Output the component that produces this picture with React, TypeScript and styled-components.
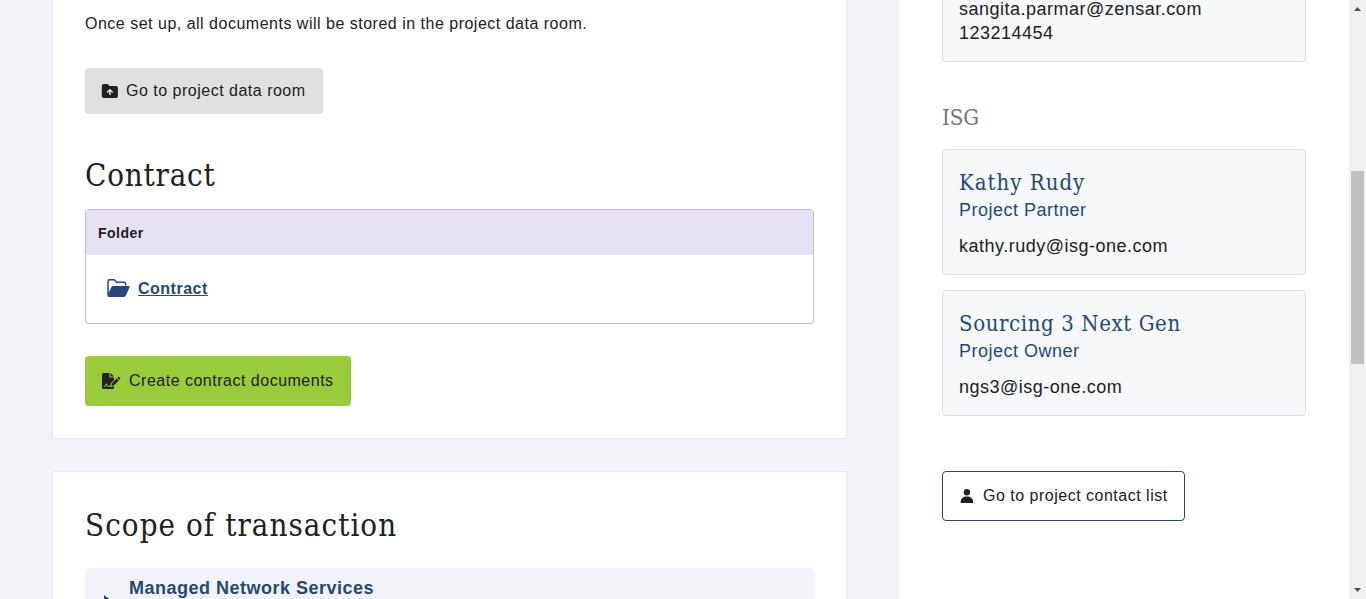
import React from "react";
import styled, { createGlobalStyle } from "styled-components";

const GlobalStyle = createGlobalStyle`
  * { box-sizing: border-box; }
  body {
    margin: 0;
    overflow: hidden;
    background: #f2f3f8;
    color: #212121;
    font: 16px/24px "Liberation Sans", Arial, sans-serif;
    letter-spacing: 0.5px;
  }
`;

const slab = `"Roboto Slab", "DejaVu Serif Condensed", "DejaVu Serif", serif`;

const Page = styled.div`
  display: flex;
  height: 599px;
  overflow: hidden;
`;

const Main = styled.main`
  width: 899px;
  padding: 0 52px;
  display: flex;
  flex-direction: column;
  gap: 32px;
`;

const Panel = styled.section<{ $first?: boolean }>`
  flex: none;
  height: ${(p) => (p.$first ? 439 : 180)}px;
  padding: ${(p) => (p.$first ? "12px" : "31px")} 32px 0;
  background: #fff;
  border: 1px solid #e8e8ea;
  border-top-width: ${(p) => (p.$first ? 0 : 1)}px;
`;

const Intro = styled.p`
  margin: 0 0 32px;
`;

const Heading = styled.h2<{ $top?: number; $spacing: number }>`
  margin: ${(p) => p.$top ?? 0}px 0 0;
  height: 44px;
  font: 400 31px/44px ${slab};
  letter-spacing: ${(p) => p.$spacing}px;
  white-space: nowrap;
`;

const Button = styled.button<{ $tone: "grey" | "green" | "outline" }>`
  display: flex;
  align-items: center;
  width: ${(p) => ({ grey: 238, green: 266, outline: 243 })[p.$tone]}px;
  height: ${(p) => (p.$tone === "grey" ? 46 : 50)}px;
  padding: 0 0 0 ${(p) => (p.$tone === "green" ? 17 : 16)}px;
  gap: ${(p) => ({ grey: 8, green: 8, outline: 9 })[p.$tone]}px;
  color: #212121;
  background: ${(p) => ({ grey: "#e0e0e0", green: "#9acb3b", outline: "#fff" })[p.$tone]};
  border: ${(p) => (p.$tone === "outline" ? "1px solid #27477a" : "0")};
  border-radius: 4px;
  font: inherit;
  letter-spacing: inherit;
  white-space: nowrap;

  svg { flex: none; }
`;

const FolderTable = styled.div`
  height: 115px;
  margin: 12px 0 32px;
  border: 1px solid #bdb8d6;
  border-radius: 4px;
  overflow: hidden;
`;

const TableHead = styled.div`
  height: 45px;
  padding: 0 12px;
  background: #e7e2f1;
  font-size: 14px;
  font-weight: 700;
  line-height: 46px;
`;

const TableRow = styled.div`
  display: flex;
  align-items: center;
  gap: 8px;
  height: 67px;
  padding-left: 21px;

  svg { margin-bottom: 2px; }
`;

const FolderLink = styled.a`
  color: #27477a;
  font-weight: 700;
  text-decoration: underline;
`;

const Accordion = styled.div`
  display: flex;
  gap: 17px;
  height: 60px;
  margin-top: 21px;
  padding: 8px 19px;
  border-radius: 4px;
  background: #f2f3f8;
  color: #27477a;
  font-size: 18px;
  font-weight: 700;

  svg { margin-top: 19px; }
`;

const Aside = styled.aside`
  width: 450px;
  padding: 0 43px;
  background: #fff;
`;

const ContactCard = styled.article<{ $tail?: boolean }>`
  display: flow-root;
  height: ${(p) => (p.$tail ? 62 : 126)}px;
  margin-bottom: ${(p) => (p.$tail ? 41 : 15)}px;
  padding: ${(p) => (p.$tail ? "0" : "18px")} 16px 0;
  border: 1px solid #d9dee6;
  border-top-width: ${(p) => (p.$tail ? 0 : 1)}px;
  border-radius: ${(p) => (p.$tail ? "0 0 4px 4px" : "4px")};
  background: #f6f8fa;
  font-size: 18px;
`;

const TailLines = styled.div`
  margin-top: -3px;
`;

const GroupTitle = styled.h3`
  margin: 0 0 16px;
  height: 30px;
  color: #757575;
  font: 400 22px/30px ${slab};
  letter-spacing: -0.1px;
`;

const Name = styled.div<{ $spacing: number }>`
  height: 30px;
  color: #27477a;
  font: 400 22px/30px ${slab};
  letter-spacing: ${(p) => p.$spacing}px;
`;

const Role = styled.div`
  margin-bottom: 12px;
  color: #27477a;
`;

const ButtonSlot = styled.div`
  padding-top: 40px;
`;

const Scrollbar = styled.div`
  display: flex;
  flex-direction: column;
  align-items: center;
  justify-content: space-between;
  width: 17px;
  padding: 7px 0;
  background: #f0f0f0;

  svg { display: block; }
`;

const Thumb = styled.div`
  width: 13px;
  height: 193px;
  margin: 159px 0 223px;
  background: #c1c1c1;
`;

const UploadFolder = () => (
  <svg width="17" height="14" viewBox="0 0 17 14">
    <path
      fill="#212121"
      d="M2.6 0H6.6L8.6 2H15.2A1.7 1.7 0 0 1 16.9 3.7V12.3A1.7 1.7 0 0 1 15.2 14H2.6A1.8 1.8 0 0 1 .8 12.2V1.8A1.8 1.8 0 0 1 2.6 0Z"
    />
    <path fill="none" stroke="#e0e0e0" strokeWidth="1.5" d="M8.9 11V6M6.2 8.4 8.9 5.7 11.6 8.4" />
  </svg>
);

const OpenFolder = () => (
  <svg width="23" height="18" viewBox="0 0 23 18">
    <path
      fill="none"
      stroke="#27477a"
      strokeWidth="1.5"
      strokeLinejoin="round"
      d="M1 16V2.5Q1 .8 2.7.8H7.2L9.6 3.2H17Q18.6 3.2 18.6 4.8V6.6"
    />
    <path
      fill="#27477a"
      d="M6.2 7H21.8Q23.1 7 22.5 8.2L18.9 16.6Q18.3 18 16.9 18H1.8Q.4 18 .4 16.6L4.3 8.2Q4.9 7 6.2 7Z"
    />
  </svg>
);

const SignedFile = () => (
  <svg width="19" height="16" viewBox="0 0 19 16">
    <path
      fill="#212121"
      d="M1.5 0H7.4V4.6H12V7.1L8.5 10.6V13.6H11.4L12 13V14.5Q12 16 10.5 16H1.5Q0 16 0 14.5V1.5Q0 0 1.5 0Z"
    />
    <path fill="#212121" d="M8.5 0 12 3.5H8.5Z" />
    <path
      fill="none"
      stroke="#9acb3b"
      strokeWidth="1"
      strokeLinejoin="round"
      strokeLinecap="round"
      d="M2.2 13.5H2.8L4.3 10.8 5.6 13.5 6.7 12.5 7.4 13.5H9"
    />
    <path fill="#212121" d="M14.7 5.5 16.7 7.5 11.8 12.4 9.5 12.8 9.8 10.4Z" />
    <path fill="#212121" d="M15.3 4.9 16.1 4.1Q16.7 3.5 17.3 4.1L18.1 4.9Q18.7 5.5 18.1 6.1L17.3 6.9Z" />
  </svg>
);

const Person = () => (
  <svg width="15" height="14" viewBox="0 0 15 14">
    <circle cx="7.9" cy="3.3" r="3.2" fill="#212121" />
    <path fill="#212121" d="M1.7 14V12.5C1.7 9.6 4.2 7.5 7.9 7.5S14.1 9.6 14.1 12.5V14Z" />
  </svg>
);

const contacts = [
  { name: "Kathy Rudy", role: "Project Partner", email: "kathy.rudy@isg-one.com", spacing: 1 },
  { name: "Sourcing 3 Next Gen", role: "Project Owner", email: "ngs3@isg-one.com", spacing: 0.6 },
];

export default function App() {
  return (
    <>
      <GlobalStyle />
      <Page>
        <Main>
          <Panel $first>
            <Intro>Once set up, all documents will be stored in the project data room.</Intro>
            <Button $tone="grey">
              <UploadFolder />
              Go to project data room
            </Button>
            <Heading $top={39} $spacing={0.8}>Contract</Heading>
            <FolderTable>
              <TableHead>Folder</TableHead>
              <TableRow>
                <OpenFolder />
                <FolderLink>Contract</FolderLink>
              </TableRow>
            </FolderTable>
            <Button $tone="green">
              <SignedFile />
              Create contract documents
            </Button>
          </Panel>
          <Panel>
            <Heading $spacing={1.05}>Scope of transaction</Heading>
            <Accordion>
              <svg width="8" height="12" viewBox="0 0 8 12">
                <path fill="#27477a" d="M0 0 8 6 0 12Z" />
              </svg>
              Managed Network Services
            </Accordion>
          </Panel>
        </Main>
        <Aside>
          <ContactCard $tail>
            <TailLines>
              <div>sangita.parmar@zensar.com</div>
              <div>123214454</div>
            </TailLines>
          </ContactCard>
          <GroupTitle>ISG</GroupTitle>
          {contacts.map((c) => (
            <ContactCard key={c.name}>
              <Name $spacing={c.spacing}>{c.name}</Name>
              <Role>{c.role}</Role>
              <div>{c.email}</div>
            </ContactCard>
          ))}
          <ButtonSlot>
            <Button $tone="outline">
              <Person />
              Go to project contact list
            </Button>
          </ButtonSlot>
        </Aside>
        <Scrollbar>
          <svg width="7" height="4" viewBox="0 0 7 4">
            <path fill="#505050" d="M3.5 0 7 4H0Z" />
          </svg>
          <Thumb />
          <svg width="7" height="4" viewBox="0 0 7 4">
            <path fill="#505050" d="M0 0H7L3.5 4Z" />
          </svg>
        </Scrollbar>
      </Page>
    </>
  );
}
